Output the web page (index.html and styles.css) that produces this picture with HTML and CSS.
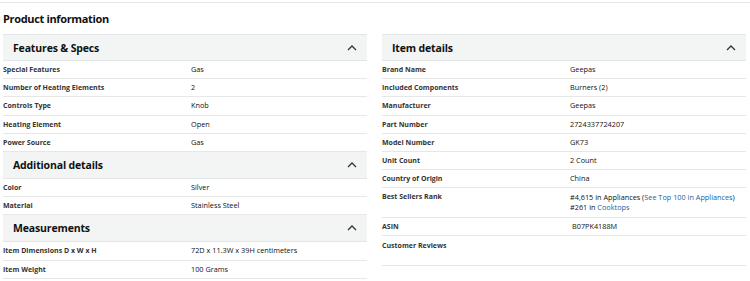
FILE: index.html
```html
<!DOCTYPE html>
<html lang="en">
<head>
<meta charset="utf-8">
<title>Product information</title>
<link rel="stylesheet" href="styles.css">
</head>
<body>
<div class="page">
  <div class="topline"></div>
  <h2 class="title">Product information</h2>
  <div class="cols">
    <div class="col">
      <div class="sec-head first"><span>Features &amp; Specs</span><svg class="chev" viewBox="0 0 10 6" width="10" height="6"><polyline points="1,5 5,1 9,5"/></svg></div>
      <div class="row"><div class="lbl">Special Features</div><div class="val">Gas</div></div>
      <div class="row"><div class="lbl">Number of Heating Elements</div><div class="val">2</div></div>
      <div class="row"><div class="lbl">Controls Type</div><div class="val">Knob</div></div>
      <div class="row"><div class="lbl">Heating Element</div><div class="val">Open</div></div>
      <div class="row"><div class="lbl">Power Source</div><div class="val">Gas</div></div>
      <div class="sec-head"><span>Additional details</span><svg class="chev" viewBox="0 0 10 6" width="10" height="6"><polyline points="1,5 5,1 9,5"/></svg></div>
      <div class="row"><div class="lbl">Color</div><div class="val">Silver</div></div>
      <div class="row"><div class="lbl">Material</div><div class="val">Stainless Steel</div></div>
      <div class="sec-head"><span>Measurements</span><svg class="chev" viewBox="0 0 10 6" width="10" height="6"><polyline points="1,5 5,1 9,5"/></svg></div>
      <div class="row"><div class="lbl">Item Dimensions D x W x H</div><div class="val">72D x 11.3W x 39H centimeters</div></div>
      <div class="row"><div class="lbl">Item Weight</div><div class="val">100 Grams</div></div>
    </div>
    <div class="col">
      <div class="sec-head first"><span>Item details</span><svg class="chev" viewBox="0 0 10 6" width="10" height="6"><polyline points="1,5 5,1 9,5"/></svg></div>
      <div class="row"><div class="lbl">Brand Name</div><div class="val">Geepas</div></div>
      <div class="row"><div class="lbl">Included Components</div><div class="val">Burners (2)</div></div>
      <div class="row"><div class="lbl">Manufacturer</div><div class="val">Geepas</div></div>
      <div class="row"><div class="lbl">Part Number</div><div class="val">2724337724207</div></div>
      <div class="row"><div class="lbl">Model Number</div><div class="val">GK73</div></div>
      <div class="row"><div class="lbl">Unit Count</div><div class="val">2 Count</div></div>
      <div class="row"><div class="lbl">Country of Origin</div><div class="val">China</div></div>
      <div class="row rank"><div class="lbl">Best Sellers Rank</div><div class="val"><div>#4,615 in Appliances (<a href="#">See Top 100 in Appliances</a>)</div><div>#261 in <a href="#">Cooktops</a></div></div></div>
      <div class="row"><div class="lbl">ASIN</div><div class="val asin">B07PK4188M</div></div>
      <div class="row reviews"><div class="lbl">Customer Reviews</div><div class="val"></div></div>
    </div>
  </div>
</div>
</body>
</html>
```
FILE: styles.css
```css
* { box-sizing: border-box; }
body {
  margin: 0;
  background: #fff;
  font-family: "Open Sans", "Noto Sans", "Liberation Sans", sans-serif;
  color: #0f1111;
}
.page {
  padding: 2px 4px 0 3px;
}
.topline {
  border-top: 1px solid #e7e7e7;
  margin: 0 -4px 0 -3px;
}
.title {
  margin: 0;
  padding-top: 9px;
  margin-bottom: 8px;
  font-size: 11px;
  line-height: 14px;
  font-weight: 700;
  letter-spacing: -0.35px;
}
.cols {
  display: grid;
  grid-template-columns: 364px 364px;
  column-gap: 15px;
  align-items: start;
}
.sec-head {
  display: flex;
  align-items: center;
  justify-content: space-between;
  height: 27px;
  padding: 0 10px 0 10px;
  background: #f3f5f5;
  border-bottom: 1px solid #e3e6e6;
  font-size: 10.5px;
  font-weight: 700;
  letter-spacing: -0.15px;
}
.sec-head.first {
  height: 27px;
  border-top: 1px solid #e3e6e6;
}
.chev {
  display: block;
  fill: none;
  stroke: #333;
  stroke-width: 1.3;
}
.row {
  display: grid;
  grid-template-columns: 188px 1fr;
  padding: 4.1px 0;
  line-height: 9px;
  font-size: 7px;
  border-bottom: 1px solid #e7e7e7;
}
.lbl {
  font-weight: 700;
  color: #333;
}
.val {
  color: #0f1111;
  font-size: 7.3px;
}
.rank .val {
  line-height: 10px;
}
.rank .lbl {
  line-height: 10px;
}
.asin {
  padding-left: 2px;
}
.reviews {
  height: 30.5px;
  padding-top: 5px;
}
a {
  color: #2162a1;
  text-decoration: none;
}
```
